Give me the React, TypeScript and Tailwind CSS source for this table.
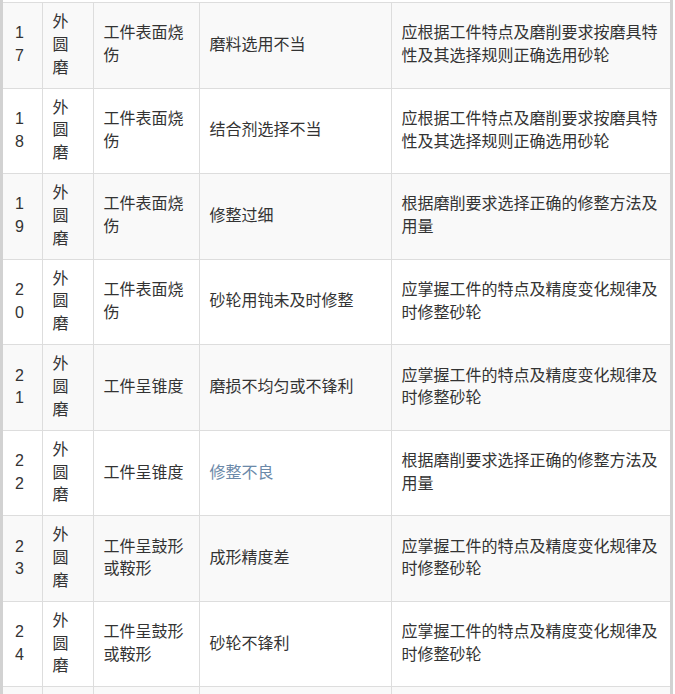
import React from "react";

interface RowProps {
  no: string;
  kind: string;
  defect: string;
  cause: string;
  fix: string;
  link?: boolean;
}

const rows: RowProps[] = [
  { no: "17", kind: "外圆磨", defect: "工件表面烧伤", cause: "磨料选用不当", fix: "应根据工件特点及磨削要求按磨具特性及其选择规则正确选用砂轮" },
  { no: "18", kind: "外圆磨", defect: "工件表面烧伤", cause: "结合剂选择不当", fix: "应根据工件特点及磨削要求按磨具特性及其选择规则正确选用砂轮" },
  { no: "19", kind: "外圆磨", defect: "工件表面烧伤", cause: "修整过细", fix: "根据磨削要求选择正确的修整方法及用量" },
  { no: "20", kind: "外圆磨", defect: "工件表面烧伤", cause: "砂轮用钝未及时修整", fix: "应掌握工件的特点及精度变化规律及时修整砂轮" },
  { no: "21", kind: "外圆磨", defect: "工件呈锥度", cause: "磨损不均匀或不锋利", fix: "应掌握工件的特点及精度变化规律及时修整砂轮" },
  { no: "22", kind: "外圆磨", defect: "工件呈锥度", cause: "修整不良", fix: "根据磨削要求选择正确的修整方法及用量", link: true },
  { no: "23", kind: "外圆磨", defect: "工件呈鼓形或鞍形", cause: "成形精度差", fix: "应掌握工件的特点及精度变化规律及时修整砂轮" },
  { no: "24", kind: "外圆磨", defect: "工件呈鼓形或鞍形", cause: "砂轮不锋利", fix: "应掌握工件的特点及精度变化规律及时修整砂轮" },
];

const cell = "border-t border-l border-[#dddddd] first:border-l-0 px-[10px] py-2 align-middle";

const App = () => {
  return (
    <div
      className="w-[675px] h-[694px] overflow-hidden bg-white"
      style={{ fontFamily: '"Liberation Sans", "Noto Sans CJK SC", sans-serif' }}
    >
      <div className="w-[673px] h-full border-x-[3px] border-[#d2d2d2] pt-[2px]">
        <table className="w-[667px] table-fixed border-collapse text-[16px] leading-[1.42857] text-[#333333]">
          <colgroup>
            <col className="w-[39px]" />
            <col className="w-[51px]" />
            <col className="w-[106px]" />
            <col className="w-[192px]" />
            <col className="w-[279px]" />
          </colgroup>
          <tbody>
            {React.Children.toArray(
              rows.map((item, i) => (
                <tr className={i % 2 === 0 ? "bg-[#f9f9f9]" : "bg-white"}>
                  <td className={cell + " break-all pl-[12px] pr-[11px]"}>{item.no}</td>
                  <td className={cell + " break-all"}>{item.kind}</td>
                  <td className={cell}>{item.defect}</td>
                  <td className={cell + (item.link ? " text-[#6b89a9]" : "")}>{item.cause}</td>
                  <td className={cell}>{item.fix}</td>
                </tr>
              ))
            )}
            <tr className="bg-[#f9f9f9]">
              <td className={cell}>&nbsp;</td>
              <td className={cell}>&nbsp;</td>
              <td className={cell}>&nbsp;</td>
              <td className={cell}>&nbsp;</td>
              <td className={cell}>&nbsp;</td>
            </tr>
          </tbody>
        </table>
      </div>
    </div>
  );
};

export default App;
